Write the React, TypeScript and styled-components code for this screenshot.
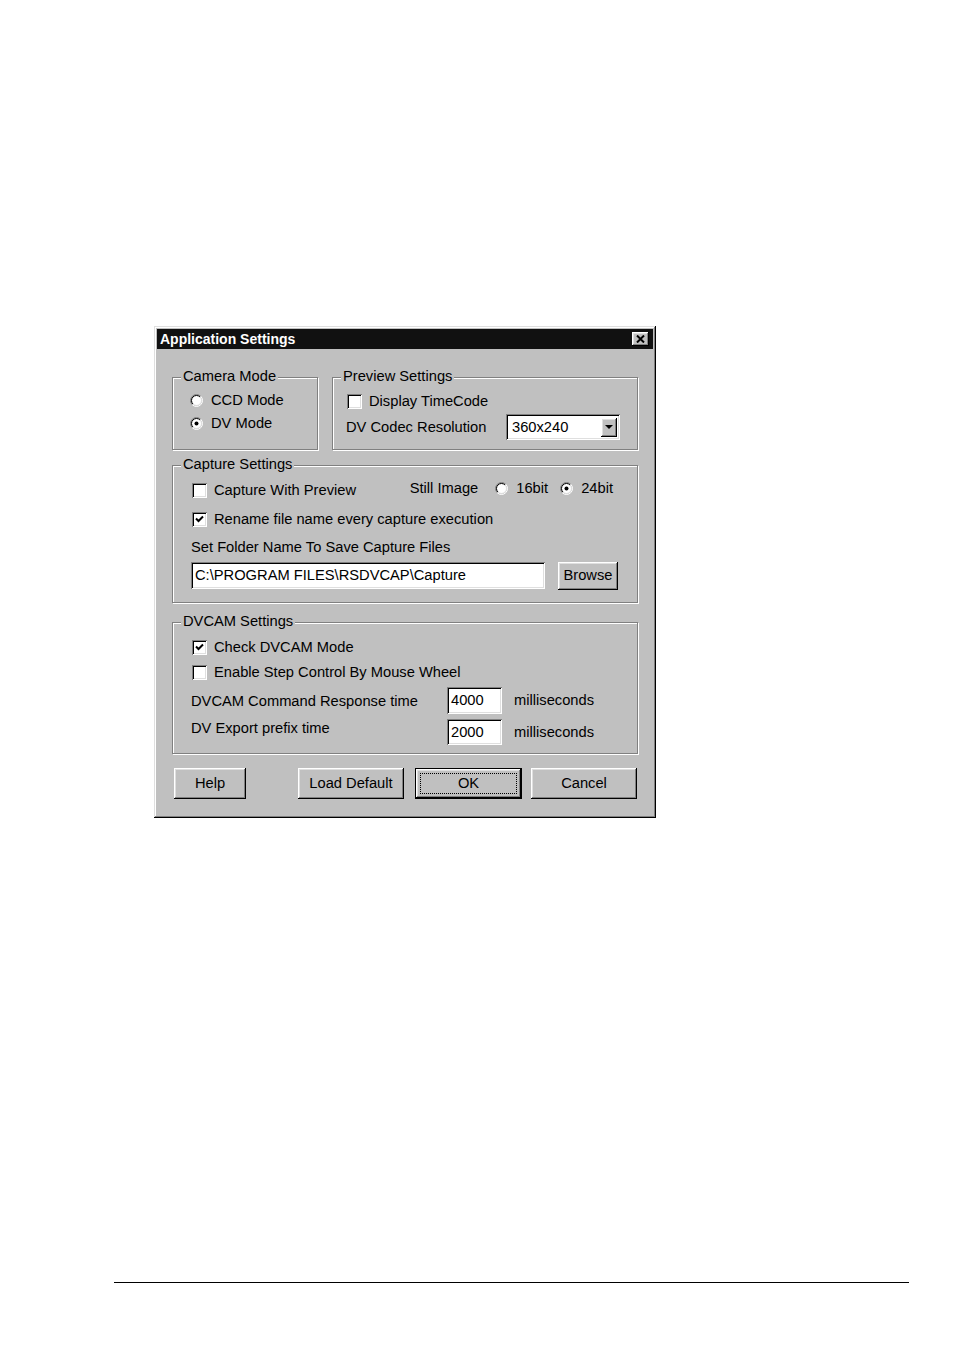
import React from 'react';
import styled, { createGlobalStyle, css } from 'styled-components';

const GlobalStyle = createGlobalStyle`
  html, body {
    margin: 0;
    padding: 0;
    background: #fff;
  }
  body {
    font-family: "Liberation Sans", Arial, sans-serif;
  }
`;

const raised = css`
  box-shadow: inset -1px -1px 0 #000, inset 1px 1px 0 #fff, inset -2px -2px 0 #808080,
    inset 2px 2px 0 #dfdfdf;
`;

const sunken = css`
  box-shadow: inset 1px 1px 0 #808080, inset -1px -1px 0 #fff, inset 2px 2px 0 #000,
    inset -2px -2px 0 #dfdfdf;
`;

const Page = styled.div`
  width: 954px;
  height: 1351px;
  padding-top: 326px;
  box-sizing: border-box;
  display: flex;
  flex-direction: column;
`;

const Window = styled.div`
  width: 502px;
  height: 492px;
  margin-left: 154px;
  box-sizing: border-box;
  padding: 3px;
  background: #c0c0c0;
  box-shadow: inset -1px -1px 0 #000, inset 1px 1px 0 #dfdfdf, inset -2px -2px 0 #808080,
    inset 2px 2px 0 #fff;
  display: flex;
  flex-direction: column;
`;

const TitleBar = styled.div`
  height: 20px;
  flex-shrink: 0;
  background: #111;
  color: #fff;
  display: flex;
  align-items: center;
  justify-content: space-between;
  padding: 0 4px 0 3px;
`;

const TitleText = styled.span`
  font-weight: bold;
  font-size: 14px;
`;

const CloseButton = styled.div`
  width: 17px;
  height: 14px;
  background: #c0c0c0;
  ${raised};
  display: flex;
  align-items: center;
  justify-content: center;
`;

const Body = styled.div`
  padding: 28px 15px 0 15px;
  display: flex;
  flex-direction: column;
  font-size: 14.7px;
  line-height: 17px;
  color: #000;
`;

const TopRow = styled.div`
  display: flex;
  gap: 14px;
`;

const Group = styled.div<{ $w?: number; $h: number; $mt?: number; $pt: number; $pl: number }>`
  position: relative;
  box-sizing: border-box;
  width: ${(p) => (p.$w ? `${p.$w}px` : 'auto')};
  height: ${(p) => p.$h}px;
  margin-top: ${(p) => p.$mt ?? 0}px;
  padding: ${(p) => p.$pt}px ${(p) => 0}px 0 ${(p) => p.$pl}px;
  border: 1px solid #808080;
  box-shadow: inset 1px 1px 0 #fff, 1px 1px 0 #fff;
  display: flex;
  flex-direction: column;
`;

const Legend = styled.span`
  position: absolute;
  top: -10px;
  left: 8px;
  padding: 0 2px;
  background: #c0c0c0;
  line-height: 17px;
  white-space: nowrap;
`;

const Row = styled.div<{ $h: number; $mt?: number }>`
  display: flex;
  align-items: center;
  height: ${(p) => p.$h}px;
  margin-top: ${(p) => p.$mt ?? 0}px;
  white-space: nowrap;
`;

const Option = styled.div<{ $gap: number; $ml?: number }>`
  display: flex;
  align-items: center;
  gap: ${(p) => p.$gap}px;
  margin-left: ${(p) => p.$ml ?? 0}px;
`;

const Label = styled.span<{ $w?: number; $top?: boolean }>`
  display: inline-block;
  width: ${(p) => (p.$w ? `${p.$w}px` : 'auto')};
  align-self: ${(p) => (p.$top ? 'flex-start' : 'center')};
  line-height: 18px;
`;

const Box = styled.span`
  width: 15px;
  height: 15px;
  flex-shrink: 0;
  background: #fff;
  ${sunken};
  display: flex;
  align-items: center;
  justify-content: center;
`;

const StillGroup = styled.div`
  display: flex;
  align-items: center;
  margin-left: auto;
  margin-right: 24px;
  margin-bottom: 4px;
`;

const TextField = styled.div<{ $w: number; $h: number }>`
  width: ${(p) => p.$w}px;
  height: ${(p) => p.$h}px;
  box-sizing: border-box;
  background: #fff;
  ${sunken};
  padding: 0 4px;
  display: flex;
  align-items: center;
  flex-shrink: 0;
`;

const Combo = styled.div`
  width: 114px;
  height: 26px;
  box-sizing: border-box;
  background: #fff;
  ${sunken};
  padding: 3px 3px 3px 6px;
  display: flex;
  align-items: center;
`;

const ComboValue = styled.span`
  flex: 1;
`;

const ComboButton = styled.span`
  width: 16px;
  height: 19px;
  background: #c0c0c0;
  ${raised};
  display: flex;
  align-items: center;
  justify-content: center;
`;

const Unit = styled.span<{ $ml: number }>`
  margin-left: ${(p) => p.$ml}px;
`;

const ButtonRow = styled.div`
  display: flex;
  margin-top: 14px;
  padding-left: 2px;
`;

const Button = styled.div<{ $w: number; $ml?: number; $default?: boolean }>`
  position: relative;
  width: ${(p) => p.$w}px;
  height: 31px;
  margin-left: ${(p) => p.$ml ?? 0}px;
  box-sizing: border-box;
  background: #c0c0c0;
  display: flex;
  align-items: center;
  justify-content: center;
  ${(p) =>
    p.$default
      ? css`
          box-shadow: inset 0 0 0 1px #000, inset -2px -2px 0 #000, inset 2px 2px 0 #fff,
            inset -3px -3px 0 #808080, inset 3px 3px 0 #dfdfdf;
        `
      : raised};
`;

const FocusRect = styled.span`
  position: absolute;
  inset: 5px;
  border: 1px dotted #000;
`;

const Rule = styled.div`
  width: 795px;
  height: 1px;
  margin: 464px 0 0 114px;
  background: #000;
`;

const arc = (r: number, c: number, sweep: 0 | 1) => {
  const d = r * Math.SQRT1_2;
  return `M ${c + d} ${c - d} A ${r} ${r} 0 0 ${sweep} ${c - d} ${c + d}`;
};

const Radio = ({ checked }: { checked?: boolean }) => (
  <svg width="13" height="13" viewBox="0 0 13 13" style={{ flexShrink: 0 }}>
    <circle cx="6.5" cy="6.5" r="5" fill="#fff" />
    <path d={arc(6, 6.5, 0)} stroke="#808080" fill="none" />
    <path d={arc(6, 6.5, 1)} stroke="#fff" fill="none" />
    <path d={arc(5, 6.5, 0)} stroke="#000" fill="none" />
    <path d={arc(5, 6.5, 1)} stroke="#dfdfdf" fill="none" />
    {checked && <circle cx="6.5" cy="6.5" r="2" fill="#000" />}
  </svg>
);

const Check = ({ checked }: { checked?: boolean }) => (
  <Box>
    {checked && (
      <svg width="9" height="8" viewBox="0 0 9 8">
        <path d="M1 3.5 L3.5 6 L8 1.5" stroke="#000" strokeWidth="2" fill="none" />
      </svg>
    )}
  </Box>
);

const RadioOption = ({ label, checked, ml }: { label: string; checked?: boolean; ml?: number }) => (
  <Option $gap={8} $ml={ml}>
    <Radio checked={checked} />
    <span>{label}</span>
  </Option>
);

const CheckOption = ({ label, checked }: { label: string; checked?: boolean }) => (
  <Option $gap={7} $ml={1}>
    <Check checked={checked} />
    <span>{label}</span>
  </Option>
);

export default function App() {
  return (
    <>
      <GlobalStyle />
      <Page>
        <Window>
          <TitleBar>
            <TitleText>Application Settings</TitleText>
            <CloseButton>
              <svg width="9" height="8" viewBox="0 0 9 8">
                <path d="M1 0.5 L8 7.5 M8 0.5 L1 7.5" stroke="#000" strokeWidth="2" />
              </svg>
            </CloseButton>
          </TitleBar>
          <Body>
            <TopRow>
              <Group $w={146} $h={73} $pt={11} $pl={17}>
                <Legend>Camera Mode</Legend>
                <Row $h={23}>
                  <RadioOption label="CCD Mode" />
                </Row>
                <Row $h={23}>
                  <RadioOption label="DV Mode" checked />
                </Row>
              </Group>
              <Group $w={306} $h={73} $pt={11} $pl={13}>
                <Legend>Preview Settings</Legend>
                <Row $h={24}>
                  <CheckOption label="Display TimeCode" />
                </Row>
                <Row $h={26} $mt={1}>
                  <Label $w={160}>DV Codec Resolution</Label>
                  <Combo>
                    <ComboValue>360x240</ComboValue>
                    <ComboButton>
                      <svg width="8" height="4" viewBox="0 0 8 4">
                        <path d="M0 0 H8 L4 4 Z" fill="#000" />
                      </svg>
                    </ComboButton>
                  </Combo>
                </Row>
              </Group>
            </TopRow>

            <Group $h={138} $mt={15} $pt={11} $pl={18}>
              <Legend>Capture Settings</Legend>
              <Row $h={26}>
                <CheckOption label="Capture With Preview" />
                <StillGroup>
                  <span>Still Image</span>
                  <RadioOption label="16bit" ml={17} />
                  <RadioOption label="24bit" checked ml={12} />
                </StillGroup>
              </Row>
              <Row $h={28} $mt={2}>
                <CheckOption label="Rename file name every capture execution" checked />
              </Row>
              <Row $h={28}>
                <Label>Set Folder Name To Save Capture Files</Label>
              </Row>
              <Row $h={29}>
                <TextField $w={354} $h={27}>C:\PROGRAM FILES\RSDVCAP\Capture</TextField>
                <Button $w={60} $ml={13} style={{ height: 28 }}>
                  Browse
                </Button>
              </Row>
            </Group>

            <Group $h={132} $mt={19} $pt={11} $pl={18}>
              <Legend>DVCAM Settings</Legend>
              <Row $h={26}>
                <CheckOption label="Check DVCAM Mode" checked />
              </Row>
              <Row $h={24}>
                <CheckOption label="Enable Step Control By Mouse Wheel" />
              </Row>
              <Row $h={27} $mt={3}>
                <Label $w={256}>DVCAM Command Response time</Label>
                <TextField $w={55} $h={27}>4000</TextField>
                <Unit $ml={12}>milliseconds</Unit>
              </Row>
              <Row $h={26} $mt={5}>
                <Label $w={256} $top>
                  DV Export prefix time
                </Label>
                <TextField $w={55} $h={26}>2000</TextField>
                <Unit $ml={12}>milliseconds</Unit>
              </Row>
            </Group>

            <ButtonRow>
              <Button $w={72}>Help</Button>
              <Button $w={106} $ml={52}>
                Load Default
              </Button>
              <Button $w={107} $ml={11} $default>
                <FocusRect />
                OK
              </Button>
              <Button $w={106} $ml={9}>
                Cancel
              </Button>
            </ButtonRow>
          </Body>
        </Window>
        <Rule />
      </Page>
    </>
  );
}
